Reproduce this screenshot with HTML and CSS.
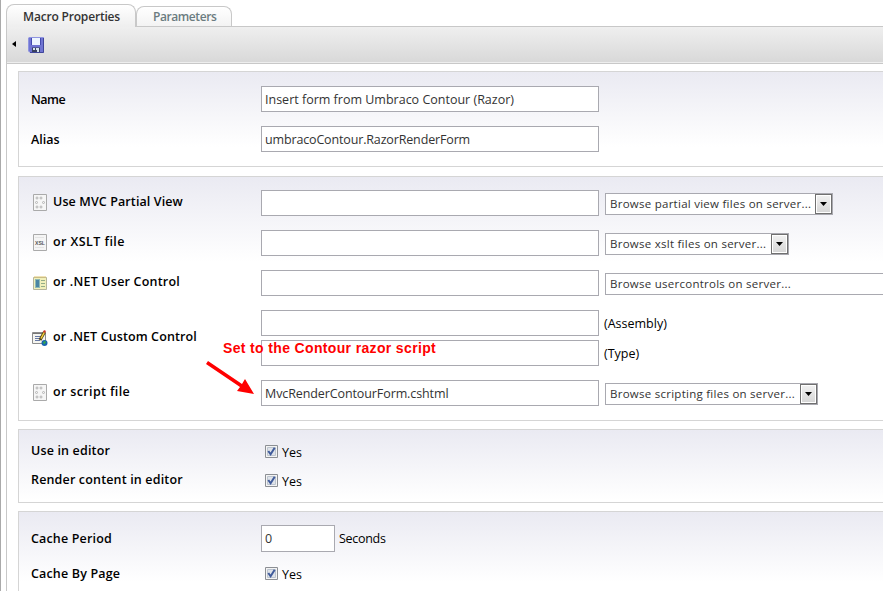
FILE: index.html
```html
<!DOCTYPE html>
<html lang="en">
<head>
<meta charset="utf-8">
<title>Macro Properties</title>
<link rel="stylesheet" href="styles.css">
</head>
<body>
<svg class="defs" width="0" height="0">
  <symbol id="dots" viewBox="0 0 14 17">
    <path d="M.5.5h13v16H.5z" fill="#f6f6f6" stroke="#aaa"/>
    <g fill="none" stroke="#b4b4b4"><circle cx="4" cy="4" r="1"/><circle cx="8" cy="4" r="1"/><circle cx="3.500" cy="8.500" r="1"/><circle cx="10.500" cy="8.500" r="1"/><circle cx="4" cy="13" r="1"/><circle cx="8" cy="13" r="1"/></g>
  </symbol>
  <symbol id="tick" viewBox="0 0 13 13">
    <path d="M.5.5h12v12H.5z" fill="#f4f4f4" stroke="#8c8f94"/>
    <path d="M2.500 2.500h8v8h-8z" fill="#dfe3e9" stroke="#bcc4cf"/>
    <path d="M3.300 6 5.600 9.300 9.700 2.700" fill="none" stroke="#405b9b" stroke-width="2"/>
  </symbol>
</svg>
<main class="frame">
  <nav class="tabs"><a class="tab active"><span class="t1">Macro Properties</span></a><a class="tab"><span class="t2">Parameters</span></a></nav>
  <div class="toolbar">
    <svg class="arrow" width="4" height="6"><path d="M4 0v6L0 3z"/></svg>
    <svg class="save" width="16" height="16" viewBox="0 0 16 16"><path d="M1 .5h14.500v15H2L.5 14V1z" fill="#6f74d2" stroke="#8f94e0"/><path d="M15.500 1v14.500H2" fill="none" stroke="#40469a"/><path d="M4 1h8v7H4z" fill="#edf5ff"/><path d="M3 1v7h1V1zM12 1v7h1V1z" fill="#444aae"/><path d="M4 10.500h8V15H4z" fill="#39415f"/><path d="M5 11h2v2H5zM8 11h3v4H9v-2H8z" fill="#d8e6ee"/></svg>
  </div>
  <div class="panels">
    <section class="panel identity">
      <div class="row"><label><span class="l0">Name</span></label><div class="box"><span class="v1">Insert form from Umbraco Contour (Razor)</span></div></div>
      <div class="row"><label>Alias</label><div class="box"><span class="v2">umbracoContour.RazorRenderForm</span></div></div>
    </section>
    <section class="panel sources">
      <div class="row"><label><svg class="icon" width="14" height="17"><use href="#dots"/></svg><span class="l1">Use MVC Partial View</span></label><div class="box"></div><div class="select s1"><span>Browse partial view files on server...</span><i><svg width="7" height="4"><path d="M0 0h7L3.500 4z"/></svg></i></div></div>
      <div class="row"><label><svg class="icon" width="14" height="17"><path d="M.5.5h13v16H.5z" fill="#f5f5f5" stroke="#aaa"/><path d="M2 3.500h9M2 13.500h9" stroke="#e4e4e4"/><text x="2" y="11" class="xsl" textLength="10" lengthAdjust="spacingAndGlyphs">XSL</text></svg><span class="l2">or XSLT file</span></label><div class="box"></div><div class="select s2"><span>Browse xslt files on server...</span><i><svg width="7" height="4"><path d="M0 0h7L3.500 4z"/></svg></i></div></div>
      <div class="row"><label><svg class="icon" width="14" height="14"><path d="M.5 1.500h13v12H.5z" fill="#f1f0ba" stroke="#b5b59c"/><path d="M1 1h12" stroke="#e1c66e"/><path d="M2 3h5v9H2z" fill="#8fb9b5"/><path d="M3 4h3v7H3z" fill="#4b86a4"/><path d="M8 4.500h4M8 7.500h4M8 10.500h4" stroke="#94ad88"/></svg><span class="l3">or .NET User Control</span></label><div class="box"></div><div class="select s3"><span>Browse usercontrols on server...</span></div></div>
      <div class="row double"><label><svg class="icon custom" width="16" height="16"><path d="M.5 2.500h13v11H.5z" fill="#f5f5f0" stroke="#8d8d8d"/><path d="M1 3.500h12" stroke="#777"/><path d="M3 6.500h6M3 8.500h5M3 10.500h5" stroke="#6678a4"/><path d="m8 10 4.500-8" stroke="#544318" stroke-width="3"/><path d="m9 8.500 3.500-6.500" stroke="#f5d23d" stroke-width="1.500"/><path d="M11.500 2 13.500 1" stroke="#cb372c" stroke-width="2"/><circle cx="12.500" cy="13" r="3" fill="#1763b0"/><path d="m11 12.500 2-2 1 2-2 2z" fill="#33a64e"/></svg><span class="l4">or .NET Custom Control</span></label><div class="stack"><div class="pair"><div class="box"></div><span class="after">(Assembly)</span></div><div class="pair"><div class="box"></div><span class="after">(Type)</span></div></div></div>
      <div class="row"><label><svg class="icon" width="14" height="17"><use href="#dots"/></svg><span class="l5">or script file</span></label><div class="box"><span class="v3">MvcRenderContourForm.cshtml</span></div><div class="select s4"><span>Browse scripting files on server...</span><i><svg width="7" height="4"><path d="M0 0h7L3.500 4z"/></svg></i></div></div>
    </section>
    <section class="panel editor">
      <div class="row"><label><span class="l6">Use in editor</span></label><svg class="check" width="13" height="13"><use href="#tick"/></svg><span class="yes">Yes</span></div>
      <div class="row"><label><span class="l6">Render content in editor</span></label><svg class="check" width="13" height="13"><use href="#tick"/></svg><span class="yes">Yes</span></div>
    </section>
    <section class="panel cache">
      <div class="row"><label><span class="l6">Cache Period</span></label><div class="box short"><span>0</span></div><span class="after sec">Seconds</span></div>
      <div class="row"><label><span class="l6">Cache By Page</span></label><svg class="check" width="13" height="13"><use href="#tick"/></svg><span class="yes">Yes</span></div>
    </section>
  </div>
</main>
<div class="note">Set to the Contour razor script</div>
<svg class="pointer" width="50" height="36"><path d="m3 0 34 23 3-5 9 15-17-3 3-4L1 3z" fill="#f00"/></svg>
</body>
</html>
```
FILE: styles.css
```css
* { box-sizing: border-box; }
body { margin: 0; width: 883px; height: 591px; overflow: hidden; background: #fff; color: #000; font: 12.5px "Open Sans", "Noto Sans", sans-serif; border-left: 1px solid #aaa; white-space: nowrap; position: relative; }
.defs { position: absolute; }
.frame { margin-left: 5px; height: 591px; padding-top: 4px; }
.tabs { display: flex; align-items: flex-end; height: 22px; }
.tab { height: 20px; width: 96px; border: 1px solid #c8c8c8; border-bottom: 0; border-radius: 8px 8px 0 0; background: linear-gradient(#fff, #f3f3f3); font-size: 12px; font-weight: 600; color: #6b7c80; padding-left: 16px; line-height: 20px; }
.tab.active { width: 130px; height: 23px; margin-bottom: -1px; background: linear-gradient(#fff, #eee); color: #333; line-height: 24px; position: relative; }
.t1 { letter-spacing: -.18px; }
.t2 { letter-spacing: -.42px; }
.toolbar { display: flex; align-items: center; height: 38px; border: solid #c8c8c8; border-width: 1px 0 1px 1px; background: linear-gradient(#efefef, #d8d8d8); box-shadow: inset 0 -1px #eee; padding-left: 5px; }
.arrow { margin-bottom: 3px; }
.save { margin-left: 12px; }
.panels { border-left: 1px solid #c8c8c8; height: 527px; padding: 7px 0 0 11px; display: flex; flex-direction: column; gap: 9px; }
.panel { flex: none; border: 1px solid #d5d5d5; border-right: 0; background: linear-gradient(#eaeaf2, #fff 70px); padding: 6px 0 0 12px; }
.identity { height: 96px; padding-top: 7px; background: linear-gradient(#eaeaf2, #fff 75px); }
.sources { height: 245px; background: linear-gradient(#eaeaf2, #fff 85px); }
.editor { height: 74px; margin-top: -1px; }
.cache { height: 100px; margin-top: -1px; }
.row { display: flex; height: 40px; align-items: center; }
.row label { width: 230px; flex: none; display: flex; align-items: center; font-weight: 600; }
.sources .row label { padding-bottom: 3px; }
.l0 { letter-spacing: -.5px; }
.l1, .l4 { letter-spacing: .11px; }
.l2 { letter-spacing: .43px; }
.l3 { letter-spacing: .2px; }
.l5 { letter-spacing: .35px; }
.l6 { letter-spacing: .16px; }
.v2 { letter-spacing: -.15px; }
.v3 { letter-spacing: -.1px; }
.icon { flex: none; margin: 2px 6px 0 2px; }
.custom { margin-left: 1px; margin-right: 5px; }
.xsl { font: bold 6px "Liberation Sans"; fill: #555; }
.box { width: 338px; height: 26px; flex: none; border: 1px solid #a9a9b0; background: #fff; padding-left: 3px; line-height: 26px; color: #333; }
.select { display: flex; justify-content: space-between; height: 22px; flex: none; margin: 1px 0 0 6px; border: 1px solid #a9a9b0; background: #fff; color: #333; padding-left: 4px; font-size: 11.5px; letter-spacing: .26px; line-height: 20px; }
.select i { display: flex; align-items: center; justify-content: center; width: 17px; height: 20px; border: 1px solid #707070; background: linear-gradient(#f2f2f2, #d5d5d5); box-shadow: inset 0 0 0 1px #fff; }
.s1 { width: 228px; } .s2 { width: 184px; } .s3 { width: 300px; } .s4 { width: 213px; }
.double { height: 70px; }
.stack { display: grid; gap: 4px; }
.pair { display: flex; align-items: center; }
.after { margin-left: 5px; padding-top: 1px; }
.sec { margin-left: 4px; letter-spacing: -.3px; }
.editor .row { height: 29px; }
.check { flex: none; margin: 1px 4px 0 4px; }
.yes { padding-top: 3px; }
.cache .row:last-child { height: 30px; }
.short { width: 74px; height: 27px; }
.note { position: absolute; left: 222px; top: 340px; font: bold 14px/17px "Liberation Sans", sans-serif; letter-spacing: .35px; color: #f00; }
.pointer { position: absolute; left: 204px; top: 361px; }
```
